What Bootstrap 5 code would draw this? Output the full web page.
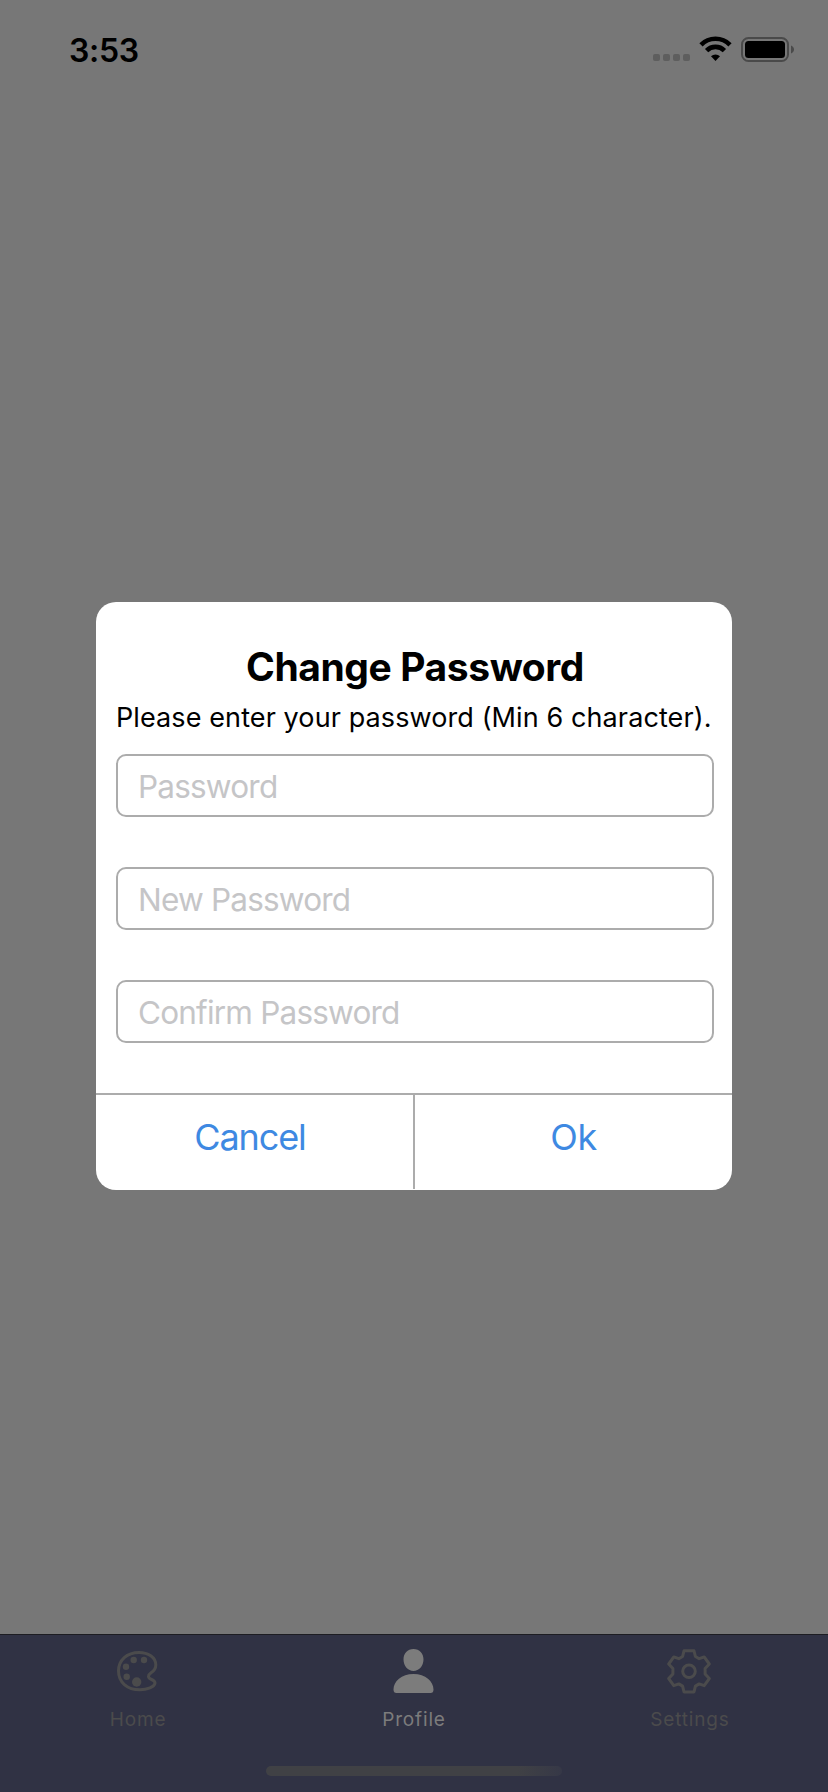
<!DOCTYPE html>
<html lang="en">
<head>
<meta charset="utf-8">
<meta name="viewport" content="width=device-width, initial-scale=1">
<title>Change Password</title>
<link href="https://cdn.jsdelivr.net/npm/bootstrap@5.3.0/dist/css/bootstrap.min.css" rel="stylesheet">
<style>
  body { font-family: Inter, "Liberation Sans", sans-serif; background: #777; }
  .screen { height: 1792px; overflow: hidden; }
  .status-bar { height: 98px; padding: 31px 34px 0 69px; color: #000; }
  .clock { font-size: 32px; line-height: 38px; font-weight: 600; letter-spacing: -.3px; padding-top: 1px; }
  .dialog-area { padding-top: 504px; }
  .dialog { width: 636px; height: 588px; border: 0; border-radius: 20px; color: #000; background: #fff; }
  .dialog-main { height: 491px; padding: 41px 18px 0 20px; }
  .dialog-title { font-size: 39px; line-height: 48px; letter-spacing: -.42px; }
  .dialog-note { font-size: 27px; line-height: 36px; margin: 9px 0 18px; letter-spacing: .1px; }
  .field { height: 63px; border: 2px solid #acacac; border-radius: 10px; padding: 2px 20px 0; font-size: 31.5px; letter-spacing: -.8px; margin-bottom: 50px; background: #fff; }
  .field::placeholder { color: #c5c5c7; opacity: 1; }
  .dialog-actions { height: 97px; border-top: 2px solid #acacac; }
  .action { font-size: 36px; line-height: 42px; padding: 21px 0 0; color: #3e89e2; border: 0; border-radius: 0; letter-spacing: -.3px; }
  .action-cancel { padding-right: 9px; letter-spacing: -1.1px; }
  .split { width: 2px; height: 94px; background: #acacac; }
  .tab-bar { height: 158px; background: #303244; border-top: 1px solid #1d1d22; }
  .tab { padding-top: 11px; color: #4b4b4c; font-size: 19px; line-height: 24px; letter-spacing: .85px; }
  .tab svg { display: block; margin-bottom: 12px; }
  .tab.current { color: #7c7c7c; }
  .home-line { width: 296px; height: 10px; border-radius: 5px; background: linear-gradient(90deg, #404145 85%, #363847); margin-bottom: 16px; }
</style>
</head>
<body>
<div class="screen d-flex flex-column">
  <header class="status-bar d-flex justify-content-between align-items-start flex-shrink-0">
    <div class="clock">3:53</div>
    <svg width="142" height="32" viewBox="0 0 142 32" aria-hidden="true">
      <g fill="#5e5e5e"><rect x="1" y="23" width="7" height="7" rx="2"/><rect x="11" y="23" width="7" height="7" rx="2"/><rect x="21" y="23" width="7" height="7" rx="2"/><rect x="31" y="23" width="7" height="7" rx="2"/></g>
      <g fill="none" stroke="#000" stroke-width="4.600"><path d="M49 13.800a20.500 20.500 0 0 1 29 0"/><path d="M54.600 19.600a12.400 12.400 0 0 1 17.800 0"/></g>
      <path d="M59 25.300a6.500 6.500 0 0 1 9 0L63.500 30Z"/>
      <rect x="90" y="7" width="46" height="23" rx="6.500" fill="none" stroke="#4a4a4a" stroke-width="2"/>
      <rect x="93" y="10" width="40" height="17" rx="3.500"/>
      <path d="M139 14.500c4 1.500 4 6.500 0 8Z" fill="#4a4a4a"/>
    </svg>
  </header>
  <main class="dialog-area flex-grow-1 d-flex justify-content-center align-items-start">
    <section class="dialog card overflow-hidden" role="dialog" aria-labelledby="dlg-title">
      <div class="dialog-main">
        <h1 class="dialog-title fw-bold text-center m-0" id="dlg-title">Change Password</h1>
        <p class="dialog-note text-nowrap">Please enter your password (Min 6 character).</p>
        <input class="field form-control" type="password" placeholder="Password">
        <input class="field form-control" type="password" placeholder="New Password">
        <input class="field form-control mb-0" type="password" placeholder="Confirm Password">
      </div>
      <div class="dialog-actions d-flex align-items-start">
        <button class="action action-cancel btn flex-fill w-50" type="button">Cancel</button>
        <div class="split flex-shrink-0"></div>
        <button class="action btn flex-fill w-50" type="button">Ok</button>
      </div>
    </section>
  </main>
  <nav class="tab-bar d-flex flex-column flex-shrink-0 align-items-center">
    <div class="row g-0 w-100 flex-grow-1">
      <div class="tab col-4 d-flex flex-column align-items-center">
        <svg width="46" height="50" viewBox="0 0 46 50"><path d="M24 6.500C33 6.500 40.800 11 40.800 19C40.800 27 33.500 26 33.500 30.500C33.500 34 40 33 40 37C39.500 41 32 43.800 25 43.800C12 43.800 3.500 36 3.500 25C3.500 14 12 6.500 24 6.500Z" fill="none" stroke="currentColor" stroke-width="3"/><g fill="currentColor"><circle cx="18.700" cy="14" r="3.200"/><circle cx="29" cy="14" r="3.200"/><circle cx="11" cy="20.700" r="3.200"/><circle cx="11.700" cy="30.700" r="3.200"/><circle cx="21.700" cy="36" r="4.700"/></g></svg>
        <span>Home</span>
      </div>
      <div class="tab current col-4 d-flex flex-column align-items-center">
        <svg width="46" height="50" viewBox="0 0 46 50"><path fill="currentColor" d="M22.500 3c6 0 10 4.500 10 10.500C32.500 20 28 25 22.500 25s-10-5-10-11.500C12.500 7.500 16.500 3 22.500 3ZM22.500 28c12 0 20 7.500 20 15.500 0 2.500-1 3.500-3 3.500h-34c-2 0-3-1-3-3.500C2.500 35.500 10.500 28 22.500 28Z"/></svg>
        <span>Profile</span>
      </div>
      <div class="tab col-4 d-flex flex-column align-items-center">
        <svg width="46" height="50" viewBox="0 0 46 50" fill="none" stroke="currentColor" stroke-width="3" stroke-linejoin="round"><circle cx="22" cy="25.300" r="6.300"/><path d="M17 4.800h10l1.400 5.700 3.800 2.200 5-1.800L42.300 18 38.100 22.600V28L42.300 32.600 37.200 39.700 32.200 37.900 28.400 40.100 27 46H17L15.600 40.100 11.800 37.900 6.800 39.700 1.700 32.600 5.900 28V22.600L1.700 18 6.800 10.900 11.800 12.700 15.600 10.500Z"/></svg>
        <span>Settings</span>
      </div>
    </div>
    <div class="home-line"></div>
  </nav>
</div>
<script src="https://cdn.jsdelivr.net/npm/bootstrap@5.3.0/dist/js/bootstrap.bundle.min.js"></script>
</body>
</html>
